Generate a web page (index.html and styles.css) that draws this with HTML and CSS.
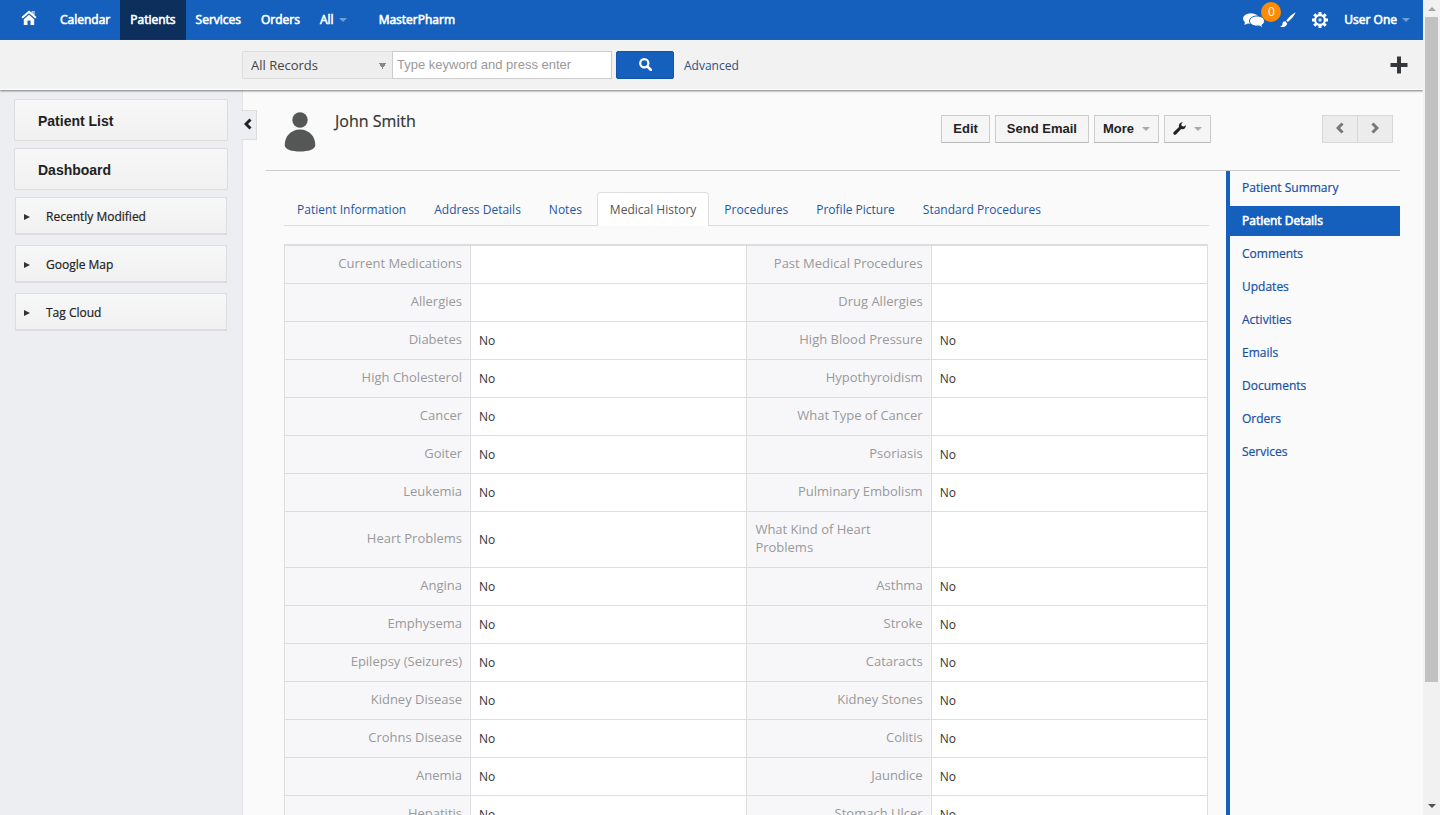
FILE: index.html
```html
<!DOCTYPE html>
<html lang="en">
<head>
  <meta charset="utf-8">
  <title>John Smith - Patients</title>
  <link rel="stylesheet" href="styles.css">
</head>
<body>
<div class="window">
  <div class="page">

    <nav class="navbar">
      <a class="nav-home" href="#" aria-label="Home">
        <svg width="16" height="16" viewBox="0 0 16 16"><path d="M8 .5L.5 7l1.200 1.600L8 3.200l6.300 5.400L15.500 7l-2-1.800V1h-1v3.300l-.8-.7V1h-1v1.800z" fill="#fff"/><path d="M8 4.800L2.800 9.200V15H6.500v-4.500h3V15h3.700V9.200z" fill="#fff"/></svg>
      </a>
      <a class="nav-link" href="#">Calendar</a>
      <a class="nav-link active" href="#">Patients</a>
      <a class="nav-link" href="#">Services</a>
      <a class="nav-link" href="#">Orders</a>
      <a class="nav-link" href="#">All <span class="caret"></span></a>
      <a class="nav-link brand" href="#">MasterPharm</a>
      <div class="nav-right">
        <a class="nav-icon chat" href="#" aria-label="Chat">
          <svg width="22" height="15" viewBox="0 0 22 15"><ellipse cx="8" cy="5.500" rx="8" ry="5.300" fill="#fff"/><path d="M2 8l-.5 4 4-2z" fill="#fff"/><path d="M14 3c4.200 0 7.500 2.300 7.500 5 0 1.700-1 3-2.600 4l.8 2.800-3.500-1.900c-.7.200-1.400.2-2.200.2-4.200 0-7.500-2.300-7.500-5.100S9.800 3 14 3z" fill="#fff" stroke="#1560bd"/></svg>
          <span class="badge">0</span>
        </a>
        <a class="nav-icon" href="#" aria-label="Theme">
          <svg width="16" height="16" viewBox="0 0 16 16"><path d="M15.700.3C12.500 1.800 8.500 5.500 6.300 8.600l1.500 1.500C11 7.500 14.500 3.500 15.700.3z" fill="#fff"/><path d="M5.500 9.200c-1.500-.2-2.800.6-3 2.200-.2 1.700-1 2.800-2.400 3.400 2.700.6 6.500.2 7.100-3.400z" fill="#fff"/></svg>
        </a>
        <a class="nav-icon gear" href="#" aria-label="Settings">
          <svg width="16" height="16" viewBox="0 0 16 16"><path d="M8 0v3M8 13v3M0 8h3M13 8h3M2.300 2.300l2.200 2.200M11.500 11.500l2.200 2.200M2.300 13.700l2.200-2.200M11.500 4.500l2.200-2.200" stroke="#fff" stroke-width="3"/><circle cx="8" cy="8" r="4.900" fill="none" stroke="#fff" stroke-width="2.200"/><circle cx="8" cy="8" r="1.700" fill="#fff" opacity=".8"/></svg>
        </a>
        <a class="nav-link user" href="#">User One <span class="caret"></span></a>
      </div>
    </nav>

    <form class="searchbar">
      <select class="search-module" aria-label="Module">
        <option>All Records</option>
      </select>
      <input class="search-text" type="text" placeholder="Type keyword and press enter" aria-label="Keyword">
      <button class="search-btn" type="button" aria-label="Search">
        <svg width="13" height="13" viewBox="0 0 13 13"><circle cx="5.300" cy="5.300" r="4.100" fill="none" stroke="#fff" stroke-width="2.200"/><path d="M8.300 8.300L12 12" stroke="#fff" stroke-width="2.600" stroke-linecap="round"/></svg>
      </button>
      <a class="advanced" href="#">Advanced</a>
      <button class="quick-add" type="button" aria-label="Quick create">
        <svg width="18" height="18" viewBox="0 0 18 18"><path d="M7 .5h4V7h6.500v4H11v6.500H7V11H.5V7H7z" fill="#33383d"/></svg>
      </button>
    </form>

    <div class="body">
      <aside class="sidebar">
        <a class="side-main" href="#">Patient List</a>
        <a class="side-main" href="#">Dashboard</a>
        <button class="side-widget" type="button"><span class="arrow"></span>Recently Modified</button>
        <button class="side-widget" type="button"><span class="arrow"></span>Google Map</button>
        <button class="side-widget" type="button"><span class="arrow"></span>Tag Cloud</button>
      </aside>

      <main class="main">
        <button class="collapse" type="button" aria-label="Hide sidebar">
          <svg width="8" height="12" viewBox="0 0 8 12"><path d="M6.500 1.500L2 6l4.500 4.500" fill="none" stroke="#222" stroke-width="3"/></svg>
        </button>

        <header class="record-header">
          <svg class="avatar" width="32" height="40" viewBox="0 0 32 40"><circle cx="16" cy="8" r="7.700" fill="#555756"/><path d="M16 17.500c9 0 15.300 7 15.300 15.500 0 4.500-7 6.500-15.300 6.500S.7 37.500.7 33C.7 24.500 7 17.500 16 17.500z" fill="#555756"/></svg>
          <h1 class="record-name">John Smith</h1>
          <div class="actions">
            <button class="btn" type="button">Edit</button>
            <button class="btn" type="button">Send Email</button>
            <button class="btn menu" type="button">More <span class="caret dark"></span></button>
            <button class="btn menu" type="button" aria-label="Tools"><svg width="13" height="13" viewBox="0 0 13 13"><path d="M12.800 3.200c.3 2-1.200 4-3.300 4-.5 0-.9 0-1.300-.2l-5 5.300c-.7.700-1.700.7-2.400.1s-.7-1.700 0-2.300L6 5C5.300 2.400 7.200.1 9.900.2L8.300 2l.4 2.100 2.200.5z" fill="#222"/></svg> <span class="caret dark"></span></button>
          </div>
          <div class="pager">
            <button class="pager-btn" type="button" aria-label="Previous"><svg width="8" height="12" viewBox="0 0 8 12"><path d="M6.500 1.500L2 6l4.500 4.500" fill="none" stroke="#777" stroke-width="3"/></svg></button>
            <button class="pager-btn" type="button" aria-label="Next"><svg width="8" height="12" viewBox="0 0 8 12"><path d="M1.500 1.500L6 6l-4.500 4.500" fill="none" stroke="#777" stroke-width="3"/></svg></button>
          </div>
        </header>

        <div class="record">
          <section class="details">
            <div class="tabs">
              <a class="tab" href="#">Patient Information</a>
              <a class="tab" href="#">Address Details</a>
              <a class="tab" href="#">Notes</a>
              <a class="tab active" href="#">Medical History</a>
              <a class="tab" href="#">Procedures</a>
              <a class="tab" href="#">Profile Picture</a>
              <a class="tab" href="#">Standard Procedures</a>
            </div>

            <div class="fields-wrap">
              <table class="fields">
                <tr><th>Current Medications</th><td></td><th>Past Medical Procedures</th><td></td></tr>
                <tr><th>Allergies</th><td></td><th>Drug Allergies</th><td></td></tr>
                <tr><th>Diabetes</th><td>No</td><th>High Blood Pressure</th><td>No</td></tr>
                <tr><th>High Cholesterol</th><td>No</td><th>Hypothyroidism</th><td>No</td></tr>
                <tr><th>Cancer</th><td>No</td><th>What Type of Cancer</th><td></td></tr>
                <tr><th>Goiter</th><td>No</td><th>Psoriasis</th><td>No</td></tr>
                <tr><th>Leukemia</th><td>No</td><th>Pulminary Embolism</th><td>No</td></tr>
                <tr><th>Heart Problems</th><td>No</td><th class="wrap">What Kind of Heart Problems</th><td></td></tr>
                <tr><th>Angina</th><td>No</td><th>Asthma</th><td>No</td></tr>
                <tr><th>Emphysema</th><td>No</td><th>Stroke</th><td>No</td></tr>
                <tr><th>Epilepsy (Seizures)</th><td>No</td><th>Cataracts</th><td>No</td></tr>
                <tr><th>Kidney Disease</th><td>No</td><th>Kidney Stones</th><td>No</td></tr>
                <tr><th>Crohns Disease</th><td>No</td><th>Colitis</th><td>No</td></tr>
                <tr><th>Anemia</th><td>No</td><th>Jaundice</th><td>No</td></tr>
                <tr><th>Hepatitis</th><td>No</td><th>Stomach Ulcer</th><td>No</td></tr>
              </table>
            </div>
          </section>

          <nav class="related">
            <a class="related-link" href="#">Patient Summary</a>
            <a class="related-link active" href="#">Patient Details</a>
            <a class="related-link" href="#">Comments</a>
            <a class="related-link" href="#">Updates</a>
            <a class="related-link" href="#">Activities</a>
            <a class="related-link" href="#">Emails</a>
            <a class="related-link" href="#">Documents</a>
            <a class="related-link" href="#">Orders</a>
            <a class="related-link" href="#">Services</a>
          </nav>
        </div>
      </main>
    </div>
  </div>

  <div class="scrollbar">
    <span class="scroll-up"></span>
    <div class="scroll-thumb"></div>
    <span class="scroll-down"></span>
  </div>
</div>
</body>
</html>
```

FILE: styles.css
```css
* {
  box-sizing: border-box;
}

body {
  margin: 0;
  font-family: "Open Sans", sans-serif;
  font-size: 12px;
  line-height: 18px;
  color: #333;
}

a {
  text-decoration: none;
}

button {
  font-family: inherit;
  cursor: pointer;
}

.window {
  display: flex;
  height: 100vh;
  overflow: hidden;
}

.page {
  flex: 1;
  display: flex;
  flex-direction: column;
  min-width: 0;
  overflow: hidden;
  background: #fafafa;
}

/* top navigation */
.navbar {
  display: flex;
  flex: none;
  height: 40px;
  padding-left: 21px;
  background: #1560bd;
}

.nav-home {
  display: flex;
  align-items: center;
  width: 29px;
  padding-bottom: 4px;
}

.nav-link {
  display: flex;
  align-items: center;
  padding: 0 10px;
  color: #fff;
  -webkit-text-stroke: 0.6px #fff;
}

.nav-link.active {
  background: #0d2f5c;
}

.nav-link.brand {
  margin-left: 12px;
}

.caret {
  display: inline-block;
  margin-left: 5px;
  border: 4px solid transparent;
  border-top-color: #6f9fd8;
  border-bottom: 0;
}

.caret.dark {
  margin: 0;
  border-top-color: #aaa;
}

.nav-right {
  display: flex;
  align-items: center;
  margin-left: auto;
}

.nav-icon {
  position: relative;
  display: flex;
  margin-right: 16px;
}

.chat {
  margin-right: 15px;
}

.badge {
  position: absolute;
  top: -11px;
  left: 18px;
  width: 20px;
  height: 20px;
  border-radius: 50%;
  background: #ff8c00;
  color: #fff;
  line-height: 20px;
  text-align: center;
}

.gear {
  margin-right: 6px;
}

.nav-link.user {
  padding-right: 13px;
}

/* search row */
.searchbar {
  position: relative;
  display: flex;
  align-items: center;
  flex: none;
  height: 50px;
  padding: 0 15px 0 242px;
  background: #f2f2f2;
  border-bottom: 1px solid #fff;
  box-shadow: 0 1px 2px #777;
}

.search-module {
  appearance: none;
  width: 150px;
  height: 28px;
  padding: 0 8px;
  border: 1px solid #ddd;
  border-right: 0;
  border-radius: 2px 0 0 2px;
  background: conic-gradient(from -30deg at 50% 100%, #888 60deg, transparent 0) 136px 11px / 7px 6px no-repeat #eee;
  color: #444;
  font-family: inherit;
  font-size: 13px;
}

/* arrow points down */
.search-module {
  background-image: conic-gradient(from -30deg at 50% 100%, #888 60deg, transparent 0);
}

.search-text {
  width: 220px;
  height: 28px;
  padding: 0 4px;
  border: 1px solid #ccc;
  background: #fff;
  font-family: "Liberation Sans", Arial, sans-serif;
  font-size: 13px;
}

.search-text::placeholder {
  color: #999;
}

.search-btn {
  display: flex;
  align-items: center;
  justify-content: center;
  width: 58px;
  height: 28px;
  margin-left: 4px;
  padding: 0;
  border: 1px solid #1254a6;
  border-radius: 2px;
  background: #1560bd;
}

.advanced {
  margin-left: 10px;
  padding-top: 3px;
  color: #2c4f85;
}

.quick-add {
  display: flex;
  margin-left: auto;
  padding: 0;
  border: 0;
  background: none;
}

/* columns */
.body {
  display: flex;
  flex: 1;
  min-height: 0;
}

.sidebar {
  flex: none;
  width: 243px;
  padding: 9px 14px 0;
  border-right: 1px solid #e4e4e6;
  background: #edeef2;
}

.side-main {
  display: flex;
  align-items: center;
  height: 42px;
  margin-bottom: 7px;
  padding: 2px 0 0 23px;
  border: 1px solid #ddd;
  border-radius: 2px;
  background: linear-gradient(#f7f7f7, #f1f1f1);
  color: #222;
  font-family: "Liberation Sans", Arial, sans-serif;
  font-size: 14px;
  font-weight: bold;
}

.side-widget {
  display: flex;
  align-items: center;
  width: 212px;
  height: 38px;
  margin: 1px 1px 10px;
  padding: 2px 8px 0;
  border: 1px solid #ddd;
  border-bottom-width: 2px;
  background: linear-gradient(#f7f7f7, #f1f1f1);
  color: #222;
  font-size: 12px;
  -webkit-text-stroke: 0.2px #222;
}

.side-widget + .side-widget {
  margin-top: 0;
}

.arrow {
  margin-right: 16px;
  border: 3px solid transparent;
  border-left: 6px solid #333;
  border-right: 0;
}

.main {
  position: relative;
  flex: 1;
  min-width: 0;
  padding: 0 23px;
}

.collapse {
  position: absolute;
  top: 20px;
  left: -2px;
  width: 16px;
  height: 30px;
  padding: 0 4px 0 2px;
  border: 1px solid #ddd;
  border-left: 0;
  background: #edeef2;
}

/* record header */
.record-header {
  display: flex;
  align-items: flex-start;
  height: 81px;
  padding: 22px 7px 0 18px;
  border-bottom: 1px solid #ccc;
}

.record-name {
  margin: 0 auto 0 19px;
  color: #333;
  font-size: 16px;
  font-weight: normal;
  line-height: 18px;
  -webkit-text-stroke: 0.2px #333;
}

.actions {
  display: flex;
  gap: 5px;
  margin: 3px 111px 0 0;
}

.btn {
  height: 28px;
  padding: 0 11px 1px;
  border: 1px solid #ccc;
  border-bottom-color: #b8b8b8;
  background: #f5f5f5;
  color: #222;
  font-family: "Liberation Sans", Arial, sans-serif;
  font-size: 13px;
  font-weight: bold;
}

.btn.menu {
  display: flex;
  align-items: center;
  gap: 8px;
  padding: 0 8px 1px;
}

.pager {
  display: flex;
  margin-top: 3px;
}

.pager-btn {
  width: 36px;
  height: 28px;
  padding: 0;
  border: 1px solid #d8d8d8;
  background: #ececec;
}

.pager-btn + .pager-btn {
  margin-left: -1px;
}

.record {
  display: flex;
}

.details {
  flex: 1;
  min-width: 0;
  padding: 21px 17px 0 18px;
}

.tabs {
  display: flex;
  gap: 2px;
  border-bottom: 1px solid #ddd;
}

.tab {
  margin-bottom: -1px;
  padding: 8px 12px 7px;
  border: 1px solid transparent;
  border-bottom: 0;
  border-radius: 4px 4px 0 0;
  color: #2256a5;
}

.tab.active {
  border-color: #ddd;
  background: #fff;
  color: #555;
}

/* field table */
.fields-wrap {
  padding: 18px 1px 0 0;
}

.fields {
  width: 100%;
  border-collapse: collapse;
  border: 1px solid #ddd;
  border-top-width: 2px;
  background: #fff;
  table-layout: fixed;
}

.fields th,
.fields td {
  height: 38px;
  border: 1px solid #ddd;
}

.fields th {
  width: 20%;
  padding: 8px 8px 11px;
  background: #f7f7f9;
  color: #999;
  font-size: 13px;
  font-weight: normal;
  text-align: right;
}

.fields th:first-child {
  width: 186px;
}

.fields th.wrap {
  text-align: left;
}

.fields td {
  width: 30%;
  padding: 10px 8px 9px;
}

/* related list */
.related {
  display: flex;
  flex-direction: column;
  flex: none;
  gap: 3px;
  width: 174px;
  min-height: 100vh;
  padding-top: 2px;
  border-left: 4px solid #1560bd;
}

.related-link {
  padding: 6px 12px;
  color: #1550a5;
  -webkit-text-stroke: 0.2px #1550a5;
}

.related-link.active {
  background: #1560bd;
  color: #fff;
  -webkit-text-stroke: 0.6px #fff;
}

/* scroll bar */
.scrollbar {
  display: flex;
  flex-direction: column;
  align-items: center;
  width: 17px;
  padding: 7px 2px;
  background: #f1f1f1;
}

.scroll-up {
  border: 4px solid transparent;
  border-top: 0;
  border-bottom-color: #a3a3a3;
}

.scroll-thumb {
  width: 13px;
  height: 83%;
  margin: 6px 0 auto;
  background: #c1c1c1;
}

.scroll-down {
  border: 4px solid transparent;
  border-top-color: #505050;
  border-bottom: 0;
}
```
